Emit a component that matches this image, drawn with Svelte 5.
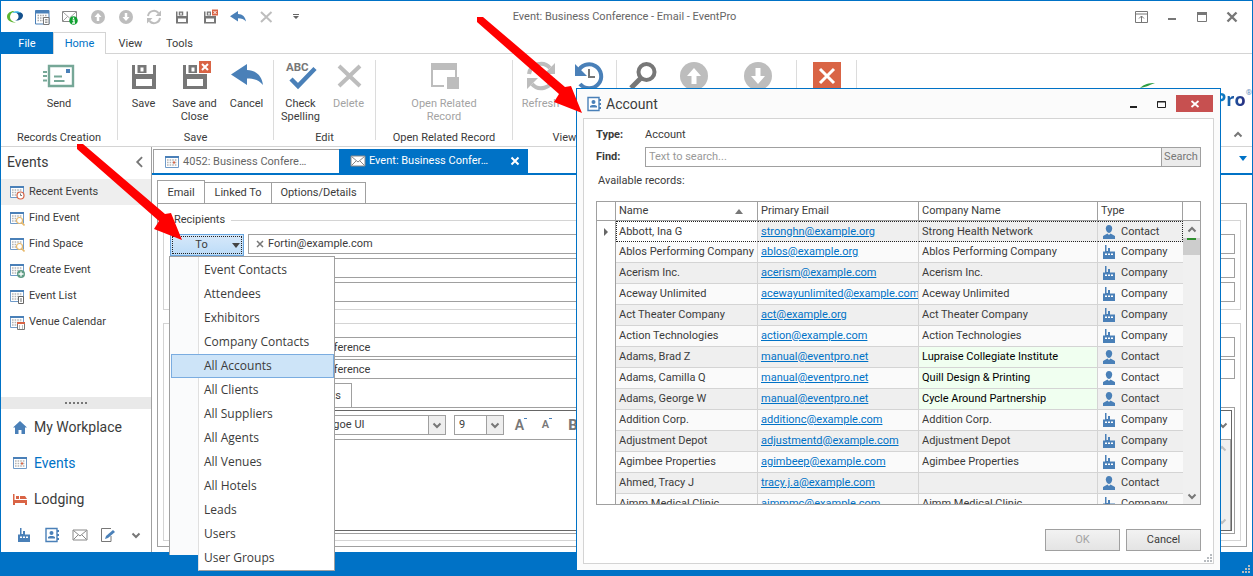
<script lang="ts">
	type RibbonButton = { label: string; icon: string; disabled?: boolean };
	type RibbonGroup = { label: string; buttons: RibbonButton[] };

	const quickAccess = ['calendarList', 'mailInfo', 'up', 'down', 'refresh', 'save', 'saveClose', 'undo', 'delete'];

	const ribbon: RibbonGroup[] = [
		{ label: 'Records Creation', buttons: [{ label: 'Send', icon: 'send' }] },
		{
			label: 'Save',
			buttons: [
				{ label: 'Save', icon: 'save' },
				{ label: 'Save and Close', icon: 'saveClose' },
				{ label: 'Cancel', icon: 'undo' }
			]
		},
		{
			label: 'Edit',
			buttons: [
				{ label: 'Check Spelling', icon: 'spelling' },
				{ label: 'Delete', icon: 'delete', disabled: true }
			]
		},
		{
			label: 'Open Related Record',
			buttons: [{ label: 'Open Related Record', icon: 'related', disabled: true }]
		},
		{
			label: 'View',
			buttons: [
				{ label: 'Refresh', icon: 'refresh', disabled: true },
				{ label: '', icon: 'history' }
			]
		},
		{
			label: '',
			buttons: [
				{ label: '', icon: 'find' },
				{ label: '', icon: 'up', disabled: true },
				{ label: '', icon: 'down', disabled: true }
			]
		},
		{ label: '', buttons: [{ label: '', icon: 'close' }] }
	];

	const sideItems = [
		{ label: 'Recent Events', badge: 'clock' },
		{ label: 'Find Event', badge: 'search' },
		{ label: 'Find Space', badge: 'search' },
		{ label: 'Create Event', badge: 'plus' },
		{ label: 'Event List', badge: 'list' },
		{ label: 'Venue Calendar', badge: 'venue' }
	];

	const navItems = [
		{ label: 'My Workplace', icon: 'home' },
		{ label: 'Events', icon: 'calendar' },
		{ label: 'Lodging', icon: 'bed' }
	];

	const recipientTypes = [
		'Event Contacts',
		'Attendees',
		'Exhibitors',
		'Company Contacts',
		'All Accounts',
		'All Clients',
		'All Suppliers',
		'All Agents',
		'All Venues',
		'All Hotels',
		'Leads',
		'Users',
		'User Groups'
	];

	const records = [
		{ name: 'Abbott, Ina G', email: 'stronghn@example.org', company: 'Strong Health Network', type: 'Contact' },
		{ name: 'Ablos Performing Company', email: 'ablos@example.org', company: 'Ablos Performing Company', type: 'Company' },
		{ name: 'Acerism Inc.', email: 'acerism@example.com', company: 'Acerism Inc.', type: 'Company' },
		{ name: 'Aceway Unlimited', email: 'acewayunlimited@example.com', company: 'Aceway Unlimited', type: 'Company' },
		{ name: 'Act Theater Company', email: 'act@example.org', company: 'Act Theater Company', type: 'Company' },
		{ name: 'Action Technologies', email: 'action@example.com', company: 'Action Technologies', type: 'Company' },
		{ name: 'Adams, Brad Z', email: 'manual@eventpro.net', company: 'Lupraise Collegiate Institute', type: 'Contact', linked: true },
		{ name: 'Adams, Camilla Q', email: 'manual@eventpro.net', company: 'Quill Design & Printing', type: 'Contact', linked: true },
		{ name: 'Adams, George W', email: 'manual@eventpro.net', company: 'Cycle Around Partnership', type: 'Contact', linked: true },
		{ name: 'Addition Corp.', email: 'additionc@example.com', company: 'Addition Corp.', type: 'Company' },
		{ name: 'Adjustment Depot', email: 'adjustmentd@example.com', company: 'Adjustment Depot', type: 'Company' },
		{ name: 'Agimbee Properties', email: 'agimbeep@example.com', company: 'Agimbee Properties', type: 'Company' },
		{ name: 'Ahmed, Tracy J', email: 'tracy.j.a@example.com', company: '', type: 'Contact' },
		{ name: 'Aimm Medical Clinic', email: 'aimmmc@example.com', company: 'Aimm Medical Clinic', type: 'Company' }
	];

	let activeType = $state('All Accounts');
	let activeNav = $state('Events');
	let activeSide = $state('Recent Events');
	let selected = $state(0);
	let search = $state('');
	let subject = $state('Business Conference');
	let linkedTo = $state('Business Conference');
</script>

{#snippet icon(name: string)}
	<svg class="icon" viewBox="0 0 32 32" aria-hidden="true">
		{#if name === 'send'}
			<path d="M6 6h24v20H6z" fill="none" stroke="#76a797" stroke-width="2.4" />
			<path d="M11 16.5h8M11 21h10.500M0 12h4M0 16h4M0 20.500h4" stroke="#76a797" stroke-width="2" />
			<path d="M23 9h4v4h-4z" fill="#4a80b8" />
		{:else if name === 'save' || name === 'saveClose'}
			<path d="M4 5h3v9h18V5h3v24H4z" fill="#777" />
			<path d="M9.500 5h9v8h-9z" fill="#777" />
			<path d="M12.500 7.500h3v4h-3zM8 19h16v7H8z" fill="#fff" />
			{#if name === 'saveClose'}
				<path d="M18 0h14v14H18z" fill="#fff" />
				<path d="M20 1h12v12H20z" fill="#d96445" />
				<path d="M23 4l6 6M29 4l-6 6" stroke="#fff" stroke-width="2" />
			{/if}
		{:else if name === 'undo'}
			<path d="M0 14.500L16 4v6c9 0 15 6 16 15-4-5-9-6.500-16-6.500V25z" fill="#4a80b8" />
		{:else if name === 'spelling'}
			<text x="1" y="11" font-size="11.500" font-weight="bold" fill="#777">ABC</text>
			<path d="M6 19l7 7L30 8.500" fill="none" stroke="#4a80b8" stroke-width="4.500" />
		{:else if name === 'delete'}
			<path d="M6 6l21 20M27 6L6 26" stroke="#bdbdbd" stroke-width="4" />
		{:else if name === 'related'}
			<path d="M3 3h26v14h-2V10H5v15h11v2H3z" fill="#bdbdbd" />
			<path d="M19 17h12v12H19z" fill="#bdbdbd" />
		{:else if name === 'refresh'}
			<path d="M4 14A12 12 0 0 1 25 8M28 18A12 12 0 0 1 7 24" fill="none" stroke="#bdbdbd" stroke-width="4" />
			<path d="M30 3v11H19zM2 29V18h11z" fill="#bdbdbd" />
		{:else if name === 'history'}
			<path d="M5 12A12 12 0 1 1 7 24" fill="none" stroke="#4a80b8" stroke-width="4" />
			<path d="M2 4v12h12z" fill="#4a80b8" />
			<path d="M16 9v8h6" fill="none" stroke="#777" stroke-width="2" />
		{:else if name === 'find'}
			<circle cx="19.500" cy="12" r="8" fill="none" stroke="#777" stroke-width="4" />
			<path d="M14 18L4 28" stroke="#777" stroke-width="5" />
		{:else if name === 'up'}
			<circle cx="16" cy="16" r="14" fill="#bdbdbd" />
			<path d="M16 8l7 8h-4.500v8h-5v-8H9z" fill="#fff" />
		{:else if name === 'down'}
			<circle cx="16" cy="16" r="14" fill="#bdbdbd" />
			<path d="M16 24l7-8h-4.500V8h-5v8H9z" fill="#fff" />
		{:else if name === 'close'}
			<path d="M2 2h28v28H2z" fill="#d96445" />
			<path d="M9 9l14 14M23 9L9 23" stroke="#fff" stroke-width="3" />
		{:else if name === 'calendarList'}
			<path d="M3 3h27v27H3z" fill="#fff" stroke="#4a80b8" stroke-width="2" />
			<path d="M3 3h27v6H3z" fill="#4a80b8" />
			<path d="M7 13h20M7 18h20M7 23h12" stroke="#aaa" stroke-width="3" stroke-dasharray="3 2" />
			<path d="M19 17h11v14H19z" fill="#fff" stroke="#777" stroke-width="2" />
			<path d="M22 21h5M22 24h5M22 27h5" stroke="#777" stroke-width="1.500" />
		{:else if name === 'mailInfo'}
			<path d="M1 5h28v20H1z" fill="#fff" stroke="#888" stroke-width="2" />
			<path d="M2 6l13 12L28 6M2 24l9-9M28 24l-9-9" fill="none" stroke="#888" stroke-width="1.500" />
			<circle cx="23" cy="23" r="8.500" fill="#10a030" />
			<path d="M23 17v3M21 22h3v6M20 28h6" stroke="#fff" stroke-width="2.500" fill="none" />
		{/if}
	</svg>
{/snippet}

{#snippet small(name: string)}
	<svg class="small-icon" viewBox="0 0 16 16" aria-hidden="true">
		{#if name === 'contact'}
			<path d="M8 1c2 0 3.200 1.500 3.200 3.600S9.800 9 8 9 4.800 6.700 4.800 4.600 6 1 8 1z" fill="#4a80b8" />
			<path d="M2 15v-3l4.500-2.500L8 11l1.500-1.500L14 12v3z" fill="#4a80b8" />
		{:else if name === 'company'}
			<path d="M2 15V7.500h2V1h1.500v6H7V4h2v3.500h5V15z" fill="#4a80b8" />
			<path d="M4 9.500h2V11H4zM7 9.500h2V11H7zM10 9.500h2V11h-2z" fill="#fff" />
		{:else if name === 'home'}
			<path d="M8 2l7 6.500h-2V15H9.500v-4h-3v4H3V8.500H1z" fill="#4a80b8" />
		{:else if name === 'bed'}
			<path d="M1 3h1.500v6H15v5h-2v-2H3v2H1zM4 5h3v3H4zM8 5h5l2 3H8z" fill="#d96445" />
		{:else if name === 'book'}
			<path d="M2 1.500h11v13H2z" fill="#fff" stroke="#4a80b8" stroke-width="1.400" />
			<path d="M14 3v2M14 7v2M14 11v2" stroke="#4a80b8" stroke-width="2" />
			<circle cx="7.500" cy="6" r="2" fill="#4a80b8" />
			<path d="M4 11.500V10l2-1h3l2 1v1.500z" fill="#4a80b8" />
		{:else if name === 'mail'}
			<path d="M1 3h14v10H1z" fill="#fff" stroke="#888" />
			<path d="M1.500 3.500L8 9l6.500-5.500M1.500 12.500L6 8M14.500 12.500L10 8" fill="none" stroke="#888" />
		{:else if name === 'edit'}
			<path d="M11 9v5.500H1.500v-13H11" fill="none" stroke="#777" />
			<path d="M5 12l1-3 7-6 2 2-7 6z" fill="#4a80b8" />
		{:else}
			<path d="M1.500 2.500h13v11h-13z" fill="#fff" stroke="#6f9ac8" />
			<path d="M1 2h14v2H1z" fill="#4a80b8" />
			<path d="M3 6h10M3 8.500h10M3 11h10" stroke="#b5b5b5" stroke-width="1.600" stroke-dasharray="1.600 1" />
			{#if name === 'clock'}
				<circle cx="11.500" cy="11.500" r="3.500" fill="#fff" stroke="#d96445" stroke-width="1.200" />
				<path d="M11.500 9.500v2h1.500" fill="none" stroke="#777" />
			{:else if name === 'search'}
				<circle cx="10.500" cy="10.500" r="3" fill="#fff" stroke="#e8b96b" stroke-width="1.200" />
				<path d="M12.500 12.500l3 3" stroke="#e8b96b" stroke-width="1.600" />
			{:else if name === 'plus'}
				<circle cx="12" cy="12" r="4" fill="#5f9c85" />
				<path d="M12 9.500v5M9.500 12h5" stroke="#fff" stroke-width="1.300" />
			{:else if name === 'list'}
				<path d="M9.500 8.500h5v7h-5z" fill="#fff" stroke="#666" />
				<path d="M11 11h2M11 13h2" stroke="#666" />
			{:else if name === 'venue'}
				<path d="M8.500 8.500h7v7h-7z" fill="#fff" stroke="#777" />
				<path d="M8 8h8v2H8z" fill="#d96445" />
				<path d="M10 12h1M13 12h1M10 14h1M13 14h1" stroke="#777" />
			{:else}
				<path d="M9 7.500h2v2H9z" fill="#d96445" />
			{/if}
		{/if}
	</svg>
{/snippet}

{#snippet chevron(dir: string)}
	<svg class="chevron {dir}" viewBox="0 0 10 10" aria-hidden="true">
		<path d="M1.500 3.500L5 7l3.500-3.500" fill="none" stroke="#777" stroke-width="2" />
	</svg>
{/snippet}

{#snippet grip()}
	<svg class="grip" viewBox="0 0 9 9" aria-hidden="true">
		<path d="M6 0h2v2H6zM3 3h2v2H3zM6 3h2v2H6zM0 6h2v2H0zM3 6h2v2H3zM6 6h2v2H6z" fill="#b8bcc0" />
	</svg>
{/snippet}

{#snippet pointer()}
	<svg viewBox="0 0 106 97" aria-hidden="true">
		<path d="M0 0h6l82 70 6-1 11 27-28-11 5-8L0 5z" fill="#f00" />
	</svg>
{/snippet}

<div class="window">
	<header class="titlebar">
		<svg class="app-logo" viewBox="0 0 16 16" aria-hidden="true">
			<path d="M8 2C4 1.500 0 4 0 7.500c0 4 4 6 9 6-4-1-6-2.500-6-5.500C3 5 5 3 8 2z" fill="#5cb531" />
			<path d="M8 3.500c4-1.500 8 0 8 3 0 3.500-4 5.500-8 5 2.500-.5 3.500-2 3.500-4S10.500 4 8 3.500z" fill="#14508c" />
			<path d="M5 4C8 1.500 12 2 14 4c-2-.5-5-.5-9 0z" fill="#35b6e6" />
		</svg>
		<div class="quick">
			{#each quickAccess as name}
				<button type="button" aria-label={name}>{@render icon(name)}</button>
			{/each}
			<button type="button" aria-label="Customize">
				<svg class="customize" viewBox="0 0 8 8" aria-hidden="true">
					<path d="M1 1h6v1H1zM1 3h6L4 6z" fill="#666" />
				</svg>
			</button>
		</div>
		<h1>Event: Business Conference - Email - EventPro</h1>
		<div class="window-buttons">
			<button type="button" aria-label="Ribbon display options">
				<svg viewBox="0 0 14 14"><path d="M.5 1.500h12v11H.5zM.5 4h12M6.500 12V6M4 8.500L6.500 6 9 8.500" fill="none" stroke="#777" /></svg>
			</button>
			<button type="button" aria-label="Minimize">
				<svg viewBox="0 0 14 14"><path d="M3 8h8v2H3z" fill="#777" /></svg>
			</button>
			<button type="button" aria-label="Maximize">
				<svg viewBox="0 0 14 14"><path d="M2.500 2.500h9v9h-9z" fill="none" stroke="#777" /><path d="M2 2h10v3H2z" fill="#777" /></svg>
			</button>
			<button type="button" aria-label="Close">
				<svg viewBox="0 0 14 14"><path d="M2.500 2.500l9 9M11.500 2.500l-9 9" stroke="#777" stroke-width="2.400" /></svg>
			</button>
		</div>
	</header>

	<nav class="ribbon-tabs">
		<button type="button" class="file">File</button>
		<button type="button" class="active">Home</button>
		<button type="button">View</button>
		<button type="button">Tools</button>
	</nav>

	<section class="ribbon">
		{#each ribbon as group}
			<div class="ribbon-group">
				<div class="ribbon-buttons" class:packed={group.buttons.length === 3}>
					{#each group.buttons as button}
						<button type="button" disabled={button.disabled} aria-label={button.label || button.icon}>
							{@render icon(button.icon)}
							<span>{button.label}</span>
						</button>
					{/each}
				</div>
				<div class="group-label">{group.label}</div>
			</div>
		{/each}
		<div class="brand">
			<div class="brand-name">
				<svg viewBox="0 0 16 6" aria-hidden="true"><path d="M0 5C4 1 9 0 15 0 9 2 7 4 0 5z" fill="#2f9e44" /></svg>
				<span>EventPro</span><sup>®</sup>
			</div>
			<button type="button" aria-label="Collapse ribbon">{@render chevron('up')}</button>
		</div>
	</section>

	<div class="body">
		<aside>
			<h2>Events {@render chevron('left')}</h2>
			<ul class="side-list">
				{#each sideItems as item}
					<li>
						<button type="button" class:active={item.label === activeSide} onclick={() => (activeSide = item.label)}>
							{@render small(item.badge)}{item.label}
						</button>
					</li>
				{/each}
			</ul>
			<div class="splitter"><i></i><i></i><i></i><i></i><i></i><i></i></div>
			<ul class="nav-list">
				{#each navItems as item}
					<li>
						<button type="button" class:active={item.label === activeNav} onclick={() => (activeNav = item.label)}>
							{@render small(item.icon)}{item.label}
						</button>
					</li>
				{/each}
			</ul>
			<div class="nav-more">
				<button type="button" aria-label="Companies">{@render small('company')}</button>
				<button type="button" aria-label="Contacts">{@render small('book')}</button>
				<button type="button" aria-label="Mail">{@render small('mail')}</button>
				<button type="button" aria-label="Notes">{@render small('edit')}</button>
				<button type="button" aria-label="More">{@render chevron('down')}</button>
			</div>
		</aside>

		<main>
			<div class="doc-tabs">
				<button type="button">{@render small('calendar')}4052: Business Confere…</button>
				<button type="button" class="active">
					{@render small('mail')}Event: Business Confer…
					<svg class="tab-close" viewBox="0 0 10 10" aria-hidden="true"><path d="M1.500 1.500l7 7M8.500 1.500l-7 7" stroke="#fff" stroke-width="2" /></svg>
				</button>
				<svg class="tab-menu" viewBox="0 0 8 5" aria-hidden="true"><path d="M0 0h8L4 5z" fill="#0072c6" /></svg>
			</div>

			<div class="form">
				<div class="page-tabs">
					<button type="button" class="active">Email</button>
					<button type="button">Linked To</button>
					<button type="button">Options/Details</button>
				</div>
				<div class="panel">
					<fieldset class="recipients">
						<legend>Recipients</legend>
						<div class="row">
							<div class="to">
								<button type="button" class="to-button" aria-haspopup="menu" aria-expanded="true">
									<span>To</span>
									<svg viewBox="0 0 8 5" aria-hidden="true"><path d="M0 0h8L4 5z" fill="#444" /></svg>
								</button>
								<div class="menu">
									<ul role="menu">
										{#each recipientTypes as type}
											<li role="none">
												<button type="button" role="menuitem" class:active={type === activeType} onclick={() => (activeType = type)}>
													{type}
												</button>
											</li>
										{/each}
									</ul>
								</div>
							</div>
							<div class="field tokens">
								<button type="button" aria-label="Remove recipient">
									<svg viewBox="0 0 8 8"><path d="M1 1l6 6M7 1L1 7" stroke="#777" stroke-width="1.500" /></svg>
								</button>
								Fortin@example.com
							</div>
						</div>
						<div class="row"><div class="to"></div><input class="field" aria-label="Cc" /></div>
						<div class="row"><div class="to"></div><input class="field" aria-label="Bcc" /></div>
					</fieldset>

					<fieldset class="message">
						<div class="message-row"><input class="field" aria-label="Subject" bind:value={subject} /></div>
						<div class="message-row"><input class="field" aria-label="Linked event" bind:value={linkedTo} /></div>
						<div class="message-tabs"><button type="button">Attachments</button></div>
						<div class="editor-frame">
							<div class="editor">
								<div class="toolbar">
									<div class="combo font">
										<select aria-label="Font"><option>Segoe UI</option></select>
										<span>{@render chevron('down')}</span>
									</div>
									<div class="combo size">
										<select aria-label="Font size"><option>9</option></select>
										<span>{@render chevron('down')}</span>
									</div>
									<button type="button" class="grow" aria-label="Grow font">A<i></i></button>
									<button type="button" class="shrink" aria-label="Shrink font">A<i></i></button>
									<button type="button" class="bold">B</button>
									<div class="overflow">{@render chevron('down')}</div>
								</div>
								<div class="canvas">
									<div class="canvas-scroll">{@render chevron('up')}{@render chevron('down')}</div>
								</div>
							</div>
						</div>
					</fieldset>
				</div>
			</div>
		</main>
	</div>

	<footer class="statusbar">{@render grip()}</footer>

	<div class="dialog" role="dialog" aria-labelledby="dialog-title">
		<div class="dialog-title">
			{@render small('book')}
			<h2 id="dialog-title">Account</h2>
			<div class="dialog-buttons">
				<button type="button" aria-label="Minimize dialog"><svg viewBox="0 0 10 10"><path d="M1 7h7v2H1z" fill="#222" /></svg></button>
				<button type="button" aria-label="Maximize dialog"><svg viewBox="0 0 10 10"><path d="M1.500 2.500h8v6h-8zM1 3h9" fill="none" stroke="#222" /></svg></button>
				<button type="button" class="close" aria-label="Close dialog"><svg viewBox="0 0 10 10"><path d="M1.500 2l7 6M8.500 2l-7 6" stroke="#fff" stroke-width="1.800" /></svg></button>
			</div>
		</div>
		<div class="dialog-body">
			<div class="line">
				<b>Type:</b>
				<span>Account</span>
			</div>
			<div class="line">
				<label for="find">Find:</label>
				<div class="search">
					<input id="find" type="text" placeholder="Text to search..." bind:value={search} />
					<button type="button">Search</button>
				</div>
			</div>
			<div class="available">Available records:</div>

			<div class="grid">
				<div class="grid-main">
					<table>
						<thead>
							<tr>
								<th class="mark"></th>
								<th class="name">
									<div>Name <svg viewBox="0 0 8 5" aria-hidden="true"><path d="M0 5h8L4 0z" fill="#777" /></svg></div>
								</th>
								<th class="email">Primary Email</th>
								<th class="company">Company Name</th>
								<th>Type</th>
							</tr>
						</thead>
						<tbody>
							{#each records as record, i}
								<tr class:selected={i === selected} onclick={() => (selected = i)}>
									<td class="mark">
										{#if i === selected}
											<svg viewBox="0 0 4 8" aria-hidden="true"><path d="M0 0v8l4-4z" fill="#666" /></svg>
										{/if}
									</td>
									<td>{record.name}</td>
									<td><a href="mailto:{record.email}">{record.email}</a></td>
									<td class:linked={record.linked}>{record.company}</td>
									<td>
										<div class="type">{@render small(record.type.toLowerCase())}{record.type}</div>
									</td>
								</tr>
							{/each}
						</tbody>
					</table>
				</div>
				<div class="scrollbar">
					<div class="scroll-head"></div>
					<div class="scroll-up">{@render chevron('up')}</div>
					<div class="thumb"></div>
					<div class="scroll-down">{@render chevron('down')}</div>
				</div>
			</div>

			<div class="actions">
				<button type="button" disabled>OK</button>
				<button type="button">Cancel</button>
			</div>
			{@render grip()}
		</div>
	</div>

	<div class="pointer to-menu">{@render pointer()}</div>
	<div class="pointer to-dialog">{@render pointer()}</div>
</div>

<style>
	:global(body) {
		margin: 0;
		background: #fff;
	}
	.window,
	.window :global(*) {
		box-sizing: border-box;
	}
	.window {
		position: relative;
		display: flex;
		flex-direction: column;
		height: 100vh;
		min-height: 576px;
		border: 1px solid #0072c6;
		border-bottom: 0;
		background: #fff;
		color: #3b3b3b;
		font: 11px/14px Roboto, 'Noto Sans', sans-serif;
		overflow: hidden;
	}
	button,
	input,
	select {
		font: inherit;
		color: inherit;
		margin: 0;
		padding: 0;
		border: 0;
		border-radius: 0;
		background: none;
	}
	ul {
		list-style: none;
		margin: 0;
		padding: 0;
	}
	h1,
	h2 {
		margin: 0;
		font-weight: normal;
	}
	svg {
		display: block;
		flex: none;
	}
	.small-icon {
		width: 16px;
		height: 16px;
	}
	.chevron {
		width: 10px;
		height: 10px;
	}
	.chevron.up {
		transform: rotate(180deg);
	}
	.chevron.left {
		width: 14px;
		height: 14px;
		transform: rotate(90deg);
	}
	.chevron.left path {
		stroke-width: 1.3;
	}
	.grip {
		width: 9px;
		height: 9px;
	}

	/* title bar */
	.titlebar {
		display: flex;
		align-items: center;
		height: 31px;
		padding: 0 9px 0 6px;
	}
	.app-logo {
		width: 16px;
		height: 16px;
	}
	.quick {
		display: flex;
		align-items: center;
		margin-left: 5px;
	}
	.quick button {
		display: flex;
		justify-content: center;
		width: 28px;
	}
	.quick .icon {
		width: 16px;
		height: 16px;
	}
	.quick .customize {
		width: 8px;
		height: 8px;
		margin-left: 4px;
	}
	.titlebar h1 {
		flex: 1;
		text-align: center;
		font-size: 11px;
		color: #666;
	}
	.window-buttons {
		display: flex;
		gap: 16px;
		padding-right: 4px;
		margin-left: 194px;
	}
	.window-buttons svg {
		width: 14px;
		height: 14px;
	}

	/* ribbon */
	.ribbon-tabs {
		display: flex;
		height: 22px;
		border-bottom: 1px solid #d4d4d4;
	}
	.ribbon-tabs button {
		width: 49px;
		height: 22px;
		padding-top: 1px;
	}
	.ribbon-tabs .file {
		width: 52px;
		background: #0072c6;
		color: #fff;
	}
	.ribbon-tabs .active {
		width: 53px;
		border: 1px solid #d4d4d4;
		border-bottom: 0;
		background: #fff;
		color: #0072c6;
	}
	.ribbon {
		display: grid;
		grid-template-columns: 117px 156px 102px 137px 104px 180px 60px 1fr;
		height: 93px;
		border-bottom: 1px solid #d4d4d4;
		line-height: 13px;
	}
	.ribbon-group {
		display: flex;
		flex-direction: column;
		justify-content: space-between;
		margin: 6px 0;
		border-right: 1px solid #dcdcdc;
		text-align: center;
	}
	.ribbon-buttons {
		display: flex;
		justify-content: center;
	}
	.ribbon-buttons button {
		display: flex;
		flex-direction: column;
		align-items: center;
		width: 48px;
		gap: 5px;
	}
	.ribbon-buttons button:only-child {
		width: 76px;
	}
	.ribbon-buttons.packed button {
		width: 51px;
	}
	.ribbon-buttons.packed button:last-child {
		flex: 1;
	}
	.ribbon-buttons button:disabled {
		color: #a3a3a3;
	}
	.ribbon-buttons .icon {
		width: 32px;
		height: 32px;
	}
	.group-label {
		margin-bottom: -4px;
	}
	.brand {
		display: flex;
		flex-direction: column;
		align-items: flex-end;
		justify-content: space-between;
		padding: 29px 0 6px 0;
	}
	.brand-name {
		display: grid;
		grid-template-columns: auto auto;
	}
	.brand-name svg {
		width: 16px;
		height: 6px;
		grid-column: 1 / 3;
	}
	.brand-name span {
		padding-left: 24px;
		font: bold 18px/20px 'Open Sans', sans-serif;
		background: linear-gradient(to right, #35b6e6 40%, #0a86cc 75%, #2b2a7c);
		background-clip: text;
		color: transparent;
	}
	.brand-name sup {
		font-size: 8px;
		line-height: 8px;
		color: #6a8fc0;
	}
	.brand button {
		padding-right: 9px;
	}

	/* sidebar */
	.body {
		display: flex;
		flex: 1;
		min-height: 0;
	}
	aside {
		display: flex;
		flex-direction: column;
		width: 151px;
		border-right: 1px solid #a0a0a0;
	}
	aside h2 {
		display: flex;
		align-items: center;
		justify-content: space-between;
		height: 32px;
		padding: 0 4px 2px 6px;
		font-size: 14px;
	}
	.side-list {
		flex: 1;
	}
	.side-list button {
		display: flex;
		align-items: center;
		gap: 4px;
		width: 100%;
		height: 26px;
		padding-left: 8px;
	}
	.side-list .active {
		background: #eee;
	}
	.splitter {
		display: flex;
		align-items: center;
		justify-content: center;
		gap: 2px;
		height: 12px;
		background: #e9e9e9;
	}
	.splitter i {
		width: 2px;
		height: 2px;
		background: #777;
	}
	.nav-list button {
		display: flex;
		align-items: center;
		gap: 6px;
		width: 100%;
		height: 36px;
		padding-left: 11px;
		font-size: 14px;
		line-height: 18px;
	}
	.nav-list .active {
		color: #0072c6;
	}
	.nav-more {
		display: flex;
		align-items: center;
		height: 35px;
		padding-left: 9px;
	}
	.nav-more button {
		display: flex;
		justify-content: center;
		width: 28px;
	}

	/* documents */
	main {
		display: flex;
		flex-direction: column;
		flex: 1;
		min-width: 0;
	}
	.doc-tabs {
		display: flex;
		align-items: flex-end;
		height: 28px;
		border-bottom: 2px solid #0072c6;
		padding-left: 1px;
	}
	.doc-tabs button {
		display: flex;
		align-items: center;
		gap: 3px;
		width: 186px;
		height: 24px;
		padding-left: 10px;
		border: 1px solid #a0a0a0;
		border-width: 1px 0 0 1px;
		color: #666;
	}
	.doc-tabs .active {
		width: 189px;
		padding: 0 8px 0 11px;
		border: 0;
		background: #0072c6;
		color: #fff;
	}
	.tab-close {
		width: 10px;
		height: 10px;
		margin-left: auto;
	}
	.tab-menu {
		width: 8px;
		height: 5px;
		margin: 0 5px 12px auto;
	}
	.form {
		display: flex;
		flex-direction: column;
		flex: 1;
		min-height: 0;
		padding: 5px;
	}
	.page-tabs {
		display: flex;
		align-items: flex-end;
		margin-bottom: -1px;
	}
	.page-tabs button {
		width: 67px;
		height: 22px;
		border: 1px solid #a0a0a0;
		border-left: 0;
		background: #fff;
	}
	.page-tabs button:last-child {
		width: 94px;
	}
	.page-tabs .active {
		width: 48px;
		height: 24px;
		border-left: 1px solid #a0a0a0;
		border-bottom: 0;
	}
	.panel {
		display: flex;
		flex-direction: column;
		flex: 1;
		min-height: 0;
		padding: 9px 5px 5px;
		border: 1px solid #a0a0a0;
	}
	fieldset {
		margin: 0;
		min-width: 0;
		border: 1px solid #d4d4d4;
	}
	legend {
		padding: 0 6px;
		margin-left: -2px;
	}
	.recipients {
		display: flex;
		flex-direction: column;
		gap: 2px;
		padding: 7px 5px 5px 6px;
	}
	.row {
		display: flex;
		align-items: flex-start;
		gap: 4px;
		min-height: 22px;
	}
	.to {
		position: relative;
		width: 74px;
	}
	.to-button {
		display: flex;
		align-items: center;
		width: 74px;
		height: 22px;
		padding-right: 3px;
		border: 1px solid #6aa5dd;
		outline: 1px dotted #222;
		outline-offset: -3px;
		background: linear-gradient(#d6e8fa, #bcdcf8);
	}
	.to-button span {
		flex: 1;
	}
	.to-button svg {
		width: 8px;
		height: 5px;
	}
	.field {
		flex: 1;
		height: 20px;
		padding: 0 4px;
		border: 1px solid #a0a0a0;
		background: #fff;
	}
	.tokens {
		display: flex;
		align-items: center;
		gap: 4px;
		padding-left: 7px;
	}
	.tokens svg {
		width: 8px;
		height: 8px;
	}
	.menu {
		position: absolute;
		z-index: 5;
		top: 22px;
		left: -1px;
		width: 166px;
		padding-left: 29px;
		border-top: 1px solid #a0a0a0;
	}
	.menu::before {
		content: '';
		position: absolute;
		top: 0;
		bottom: 16px;
		left: 0;
		width: 29px;
		border-left: 1px solid #a0a0a0;
		background: #fafbfc;
	}
	.menu ul {
		position: relative;
		padding-top: 1px;
		border: 1px solid #a0a0a0;
		border-top: 0;
		border-left-color: #e0e0e0;
		background: #fff;
	}
	.menu button {
		width: calc(100% + 28px);
		height: 24px;
		margin-left: -28px;
		padding-left: 32px;
		border: 1px solid transparent;
		text-align: left;
		font-family: 'Open Sans', sans-serif;
		font-size: 12px;
	}
	.menu .active {
		border-color: #7aace0;
		background: #cde4f8;
	}
	.message {
		display: flex;
		flex-direction: column;
		flex: 1;
		min-height: 0;
		margin-top: 13px;
		padding: 13px 5px 6px;
	}
	.message-row {
		display: flex;
		height: 22px;
		padding-left: 93px;
	}
	.message-tabs {
		display: flex;
		margin-top: 2px;
		padding-left: 100px;
	}
	.message-tabs button {
		width: 83px;
		height: 24px;
		padding-right: 10px;
		border: 1px solid #a0a0a0;
		border-bottom: 0;
		text-align: right;
	}
	.editor-frame {
		display: flex;
		flex: 1;
		min-height: 0;
		padding: 2px;
		border: 1px solid #a0a0a0;
	}
	.editor {
		display: flex;
		flex-direction: column;
		flex: 1;
		border: 1px solid #666;
	}
	.toolbar {
		display: flex;
		align-items: center;
		height: 29px;
		padding-left: 102px;
		border-bottom: 1px solid #a0a0a0;
		color: #777;
	}
	.combo {
		display: flex;
		width: 50px;
		height: 20px;
		margin-right: 4px;
		border: 1px solid #a0a0a0;
		color: #3b3b3b;
	}
	.combo.font {
		width: 171px;
		margin-right: 8px;
	}
	.combo select {
		flex: 1;
		min-width: 0;
		padding-left: 4px;
		appearance: none;
	}
	.combo.font select {
		padding-left: 45px;
	}
	.combo span {
		display: grid;
		place-items: center;
		width: 17px;
		border-left: 1px solid #a0a0a0;
		background: #eee;
	}
	.toolbar button {
		display: flex;
		width: 26px;
		justify-content: center;
		font-weight: 600;
		font-size: 14px;
	}
	.toolbar .shrink {
		font-size: 11px;
	}
	.toolbar .bold {
		font-weight: 800;
		font-size: 15px;
	}
	.toolbar i {
		width: 3px;
		height: 1px;
		background: #4a80b8;
	}
	.overflow {
		margin: 0 3px 0 auto;
	}
	.canvas {
		display: flex;
		flex: 1;
		justify-content: flex-end;
	}
	.canvas-scroll {
		display: flex;
		flex-direction: column;
		justify-content: space-between;
		width: 17px;
		padding: 4px 3px;
		border-right: 1px solid #a0a0a0;
		background: #f0f0f0;
	}
	.canvas-scroll .chevron {
		opacity: 0.4;
	}
	.statusbar {
		display: flex;
		align-items: flex-end;
		justify-content: flex-end;
		height: 24px;
		padding: 2px 1px;
		background: #0072c6;
	}

	/* account picker */
	.dialog {
		position: absolute;
		z-index: 10;
		top: 87px;
		right: 31px;
		bottom: 5px;
		width: 645px;
		display: flex;
		flex-direction: column;
		padding: 0 6px 6px;
		border: 1px solid #0072c6;
		background: #fbfbfb;
	}
	.dialog-title {
		display: flex;
		align-items: center;
		gap: 4px;
		height: 29px;
		padding-left: 3px;
	}
	.dialog-title h2 {
		flex: 1;
		font-size: 14px;
		line-height: 20px;
	}
	.dialog-buttons {
		display: flex;
		align-self: flex-start;
		margin: 6px 1px 0 0;
	}
	.dialog-buttons button {
		display: grid;
		place-items: center;
		width: 27px;
		height: 17px;
	}
	.dialog-buttons svg {
		width: 10px;
		height: 10px;
	}
	.dialog-buttons .close {
		width: 37px;
		margin-left: 2px;
		background: #c75050;
	}
	.dialog-body {
		position: relative;
		display: flex;
		flex-direction: column;
		flex: 1;
		min-height: 0;
		padding: 5px 12px 12px;
		border: 1px solid #d4d4d4;
		background: #fff;
	}
	.line {
		display: flex;
		align-items: center;
		height: 22px;
	}
	.line b,
	.line label {
		width: 49px;
		font-weight: bold;
	}
	.search {
		display: flex;
		flex: 1;
		height: 20px;
		border: 1px solid #a0a0a0;
	}
	.search input {
		flex: 1;
		padding-left: 3px;
	}
	.search input::placeholder {
		color: #999;
		opacity: 1;
	}
	.search button {
		width: 39px;
		border-left: 1px solid #a0a0a0;
		background: #ebebeb;
		color: #777;
	}
	.available {
		height: 33px;
		padding: 6px 2px;
	}
	.grid {
		display: flex;
		flex: 1;
		min-height: 0;
		border: 1px solid #a0a0a0;
	}
	.grid-main {
		flex: 1;
		overflow: hidden;
	}
	table {
		width: 100%;
		table-layout: fixed;
		border-spacing: 0;
	}
	th,
	td {
		padding: 0 3px;
		border: 0 solid #d4d4d4;
		border-width: 0 1px 1px 0;
		text-align: left;
		font-weight: normal;
		white-space: nowrap;
		overflow: hidden;
	}
	th {
		height: 19px;
		border-color: #a0a0a0;
	}
	td {
		height: 21px;
	}
	td:last-child {
		border-right: 0;
	}
	.mark {
		width: 19px;
		padding: 0 7px;
		border-right-color: #a0a0a0;
	}
	td.mark {
		border-bottom: 0;
		background: #fff;
	}
	.mark svg {
		width: 4px;
		height: 8px;
	}
	.name {
		width: 142px;
	}
	.name div {
		display: flex;
		align-items: center;
		justify-content: space-between;
		padding-right: 11px;
	}
	.name svg {
		width: 8px;
		height: 5px;
	}
	.email {
		width: 161px;
	}
	.company {
		width: 179px;
	}
	tbody tr:nth-child(odd) td:not(.mark) {
		background: #efefef;
	}
	tbody tr:nth-child(even) td:not(.mark) {
		background: #fafafa;
	}
	tbody tr td.linked:not(.mark) {
		background: #f0fff0;
		color: #000;
	}
	tbody tr.selected td:nth-child(2):not(.mark) {
		background: #fff;
	}
	tbody tr.selected td:not(.mark) {
		border-bottom: 1px dotted #222;
		border-top: 1px dotted #222;
	}
	tbody tr.selected td:nth-child(2) {
		border-left: 1px dotted #222;
		padding-left: 2px;
	}
	tbody tr.selected td:last-child {
		border-right: 1px dotted #222;
	}
	a {
		color: #0072c6;
	}
	.type {
		display: flex;
		align-items: center;
		gap: 4px;
	}
	.scrollbar {
		display: flex;
		flex-direction: column;
		width: 17px;
		background: #f0f0f0;
	}
	.scroll-head {
		height: 19px;
		border-bottom: 1px solid #a0a0a0;
		background: #fff;
	}
	.scroll-up,
	.scroll-down {
		display: grid;
		place-items: center;
		height: 17px;
	}
	.thumb {
		height: 17px;
		margin-bottom: auto;
		background: linear-gradient(#2f8f2f, #2f8f2f) top / 9px 2px no-repeat #cdcdcd;
	}
	.actions {
		display: flex;
		justify-content: flex-end;
		gap: 6px;
		padding-top: 24px;
	}
	.actions button {
		width: 75px;
		height: 22px;
		border: 1px solid #a0a0a0;
		background: linear-gradient(#f2f2f2, #e4e4e4);
	}
	.actions button:disabled {
		color: #a3a3a3;
	}
	.dialog-body > .grip {
		position: absolute;
		right: 0;
		bottom: 0;
	}

	/* callout arrows drawn over the whole window */
	.pointer {
		position: absolute;
		z-index: 20;
		pointer-events: none;
		width: 106px;
	}
	.to-menu {
		top: 143px;
		left: 76px;
	}
	.to-dialog {
		top: 16px;
		left: 476px;
	}
</style>
